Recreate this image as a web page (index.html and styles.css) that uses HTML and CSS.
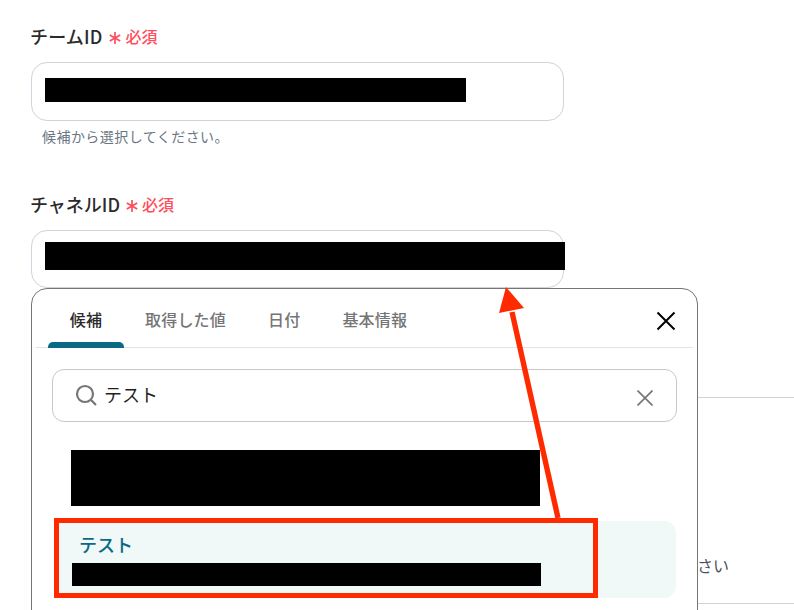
FILE: index.html
```html
<!DOCTYPE html>
<html lang="ja">
<head>
  <meta charset="UTF-8" />
  <title>チャネルID</title>
  <link rel="stylesheet" href="styles.css">
</head>
<body>
  <div class="page">
    <div class="field field-team">
      <div class="field-label">
        <span>チームID</span>
        <svg class="req-mark" width="12" height="12" viewBox="0 0 12 12">
          <path d="M6 0V12M0.8 3L11.2 9M11.2 3L0.8 9" stroke="#ff4d5e" stroke-width="1.7" fill="none" />
        </svg>
        <span class="req">必須</span>
      </div>
      <div class="input input-team"><div class="redact redact-team"></div></div>
      <p class="hint">候補から選択してください。</p>
    </div>

    <div class="field field-channel">
      <div class="field-label label-channel">
        <span>チャネルID</span>
        <svg class="req-mark" width="12" height="12" viewBox="0 0 12 12">
          <path d="M6 0V12M0.8 3L11.2 9M11.2 3L0.8 9" stroke="#ff4d5e" stroke-width="1.7" fill="none" />
        </svg>
        <span class="req">必須</span>
      </div>
      <div class="input input-channel"><div class="redact redact-channel"></div></div>
    </div>

    <!-- what is left of the form behind the popup -->
    <div class="behind">
      <p class="behind-text">さい</p>
    </div>

    <div class="popup">
      <div class="tabs">
        <div class="tab active">候補</div>
        <div class="tab">取得した値</div>
        <div class="tab">日付</div>
        <div class="tab">基本情報</div>
        <svg class="close" width="20" height="20" viewBox="0 0 20 20">
          <path d="M1.5 1.5L18.5 18.5M18.5 1.5L1.5 18.5" stroke="#000" stroke-width="2" fill="none" />
        </svg>
      </div>

      <div class="search">
        <svg class="search-icon" width="22" height="22" viewBox="0 0 22 22">
          <circle cx="10" cy="10" r="8" stroke="#757575" stroke-width="2.2" fill="none" />
          <path d="M15.8 15.8L21 21" stroke="#757575" stroke-width="2.2" fill="none" />
        </svg>
        <span class="search-text">テスト</span>
        <svg class="search-clear" width="16" height="16" viewBox="0 0 16 16">
          <path d="M0.5 0.5L15.5 15.5M15.5 0.5L0.5 15.5" stroke="#757575" stroke-width="1.6" fill="none" />
        </svg>
      </div>

      <div class="redact redact-option"></div>

      <div class="option">
        <div class="option-name">テスト</div>
        <div class="redact redact-sub"></div>
      </div>
    </div>

    <!-- annotations drawn over the screenshot -->
    <div class="callout"></div>
    <svg class="arrow" width="80" height="240" viewBox="0 0 80 240">
      <path d="M68 230L22 24" stroke="#ff2a00" stroke-width="5.4" fill="none" />
      <path d="M16 -1L9 25L34 20Z" fill="#ff2a00" />
    </svg>
  </div>
</body>
</html>
```

FILE: styles.css
```css
* {
  margin: 0;
  padding: 0;
  box-sizing: border-box;
}

body {
  background-color: #ffffff;
  color: #2b2b2b;
  font-family: "Noto Sans CJK JP", "Noto Sans", sans-serif;
}

.page {
  position: relative;
  width: 794px;
  height: 610px;
  padding: 0 0 0 31px;
  overflow: hidden;
}

.field {
  width: 533px;
}

.field-team {
  padding-top: 23px;
}

.field-channel {
  margin-top: 45px;
}

.field-label {
  display: flex;
  align-items: center;
  font-size: 18px;
  font-weight: 500;
  line-height: 26px;
  height: 26px;
  letter-spacing: 0.2px;
  margin-left: -1px;
}

.label-channel {
  letter-spacing: 0;
}

.label-channel .req-mark {
  margin-right: 4px;
}

.req-mark {
  flex: none;
  margin: 3px 5px 0 6px;
}

.req {
  color: #ff4d5e;
  font-size: 16px;
  letter-spacing: 0;
}

.input {
  border: 1px solid #cdd4dc;
  border-radius: 16px;
  padding-left: 13px;
}

.input-team {
  height: 59px;
  margin-top: 13px;
  padding-top: 15px;
}

.input-channel {
  height: 58px;
  margin-top: 13px;
  padding-top: 11px;
}

.redact {
  background-color: #000000;
}

.redact-team {
  width: 421px;
  height: 24px;
}

.redact-channel {
  width: 520px;
  height: 28px;
}

.hint {
  color: #6b7683;
  font-size: 14px;
  line-height: 20px;
  letter-spacing: 0.45px;
  margin-top: 5px;
  padding-left: 11px;
}

.behind {
  margin-top: 109px;
  margin-left: 667px;
  height: 207px;
  border-top: 1px solid #cdd4dc;
  border-bottom: 1px solid #cdd4dc;
  padding-top: 156px;
}

.behind-text {
  color: #4a5361;
  font-size: 16px;
  line-height: 22px;
  margin-left: -1px;
}

.popup {
  position: absolute;
  left: 31px;
  top: 288px;
  width: 667px;
  height: 340px;
  background-color: #ffffff;
  border: 1px solid #757575;
  border-radius: 16px;
}

.tabs {
  position: relative;
  display: flex;
  height: 59px;
  margin: 0 4px;
  padding-left: 12px;
  border-bottom: 1px solid #e2e2e2;
}

.tab {
  color: #757575;
  font-size: 16px;
  font-weight: 500;
  line-height: 24px;
  letter-spacing: 0.2px;
  padding: 18px 21px 0;
}

.tab.active {
  position: relative;
  color: #2b2b2b;
  width: 76px;
  text-align: center;
  padding: 18px 0 0;
}

.tab.active::after {
  content: "";
  position: absolute;
  left: 0;
  right: 0;
  bottom: -1px;
  height: 6px;
  background-color: #0a6a85;
  border-radius: 5px 5px 0 0;
}

.close {
  position: absolute;
  right: 17px;
  top: 22px;
}

.search {
  display: flex;
  align-items: center;
  height: 53px;
  margin: 21px 20px 0;
  padding: 0 23px 0 22px;
  border: 1px solid #c8c8c8;
  border-radius: 12px;
}

.search-icon {
  flex: none;
  margin-top: -1px;
}

.search-text {
  color: #1f1f1f;
  font-size: 18px;
  margin: -3px 0 0 7px;
  flex: 1;
}

.search-clear {
  flex: none;
  margin-top: 5px;
}

.redact-option {
  width: 469px;
  height: 56px;
  margin: 28px 0 0 39px;
}

.option {
  height: 77px;
  margin: 15px 21px 0 22px;
  padding: 11px 0 0 18px;
  background-color: #f0f9f8;
  border-radius: 12px;
}

.option-name {
  color: #0a6a85;
  font-size: 18px;
  font-weight: 500;
  line-height: 24px;
  height: 31px;
  margin-left: 7px;
}

.redact-sub {
  width: 469px;
  height: 23px;
}

.callout {
  position: absolute;
  left: 54px;
  top: 518px;
  width: 544px;
  height: 80px;
  border: 5px solid #ff2a00;
}

.arrow {
  position: absolute;
  left: 490px;
  top: 288px;
  overflow: visible;
}
```
